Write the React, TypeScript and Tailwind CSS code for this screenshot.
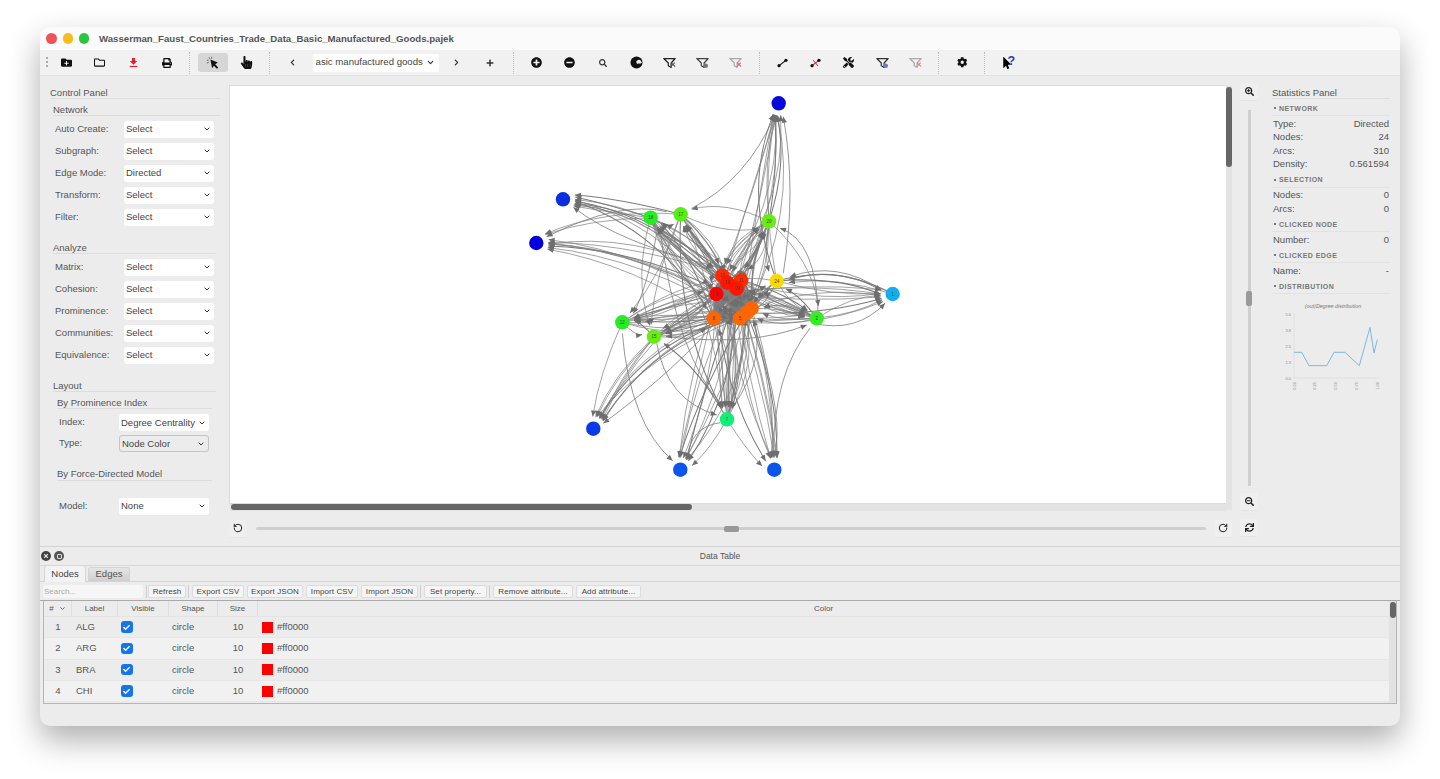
import React from "react";
import { FaFolderPlus, FaRegFolder, FaPrint, FaHandPointer, FaPlusCircle, FaMinusCircle, FaSearch, FaSearchPlus, FaSearchMinus, FaTools, FaCog, FaSync, FaChevronLeft, FaChevronRight, FaPlus, FaCheck, FaTimes, FaMousePointer } from "react-icons/fa";
import { RotateCcw, RotateCw, ChevronDown } from "lucide-react";

const font = "font-['Liberation_Sans',Arial,sans-serif]";

type N = { x: number; y: number; c: string; l: string };
const nodes: N[] = [
  { x: 778.7, y: 103.3, c: "#0808d8", l: "" },
  { x: 563, y: 199.3, c: "#0a2fe0", l: "" },
  { x: 536.3, y: 243, c: "#0000dc", l: "" },
  { x: 593.3, y: 428.7, c: "#0a3ae8", l: "" },
  { x: 680.3, y: 469.7, c: "#0a55ee", l: "" },
  { x: 774.3, y: 469.7, c: "#0a55ee", l: "" },
  { x: 892.7, y: 294, c: "#10aef0", l: "1" },
  { x: 650.7, y: 217.7, c: "#22ee22", l: "18" },
  { x: 680.7, y: 214.3, c: "#55ee11", l: "17" },
  { x: 769, y: 221.3, c: "#66ee11", l: "20" },
  { x: 816.7, y: 318.3, c: "#33ee22", l: "2" },
  { x: 622.3, y: 322.3, c: "#22ee22", l: "12" },
  { x: 654, y: 336.7, c: "#66ee11", l: "15" },
  { x: 727, y: 419.3, c: "#11ee77", l: "7" },
  { x: 776.7, y: 281, c: "#ffd800", l: "24" },
  { x: 713.7, y: 318.3, c: "#ff6600", l: "8" },
  { x: 751.7, y: 308.3, c: "#ff6600", l: "" },
  { x: 746.7, y: 312.7, c: "#ff6600", l: "" },
  { x: 740, y: 318.3, c: "#ff6600", l: "5" },
  { x: 722.3, y: 275.7, c: "#ff2a00", l: "10" },
  { x: 741, y: 280.3, c: "#ff2a00", l: "11" },
  { x: 727.3, y: 282.7, c: "#ff1500", l: "16" },
  { x: 736.7, y: 288.7, c: "#ff1500", l: "19" },
  { x: 716.3, y: 294, c: "#ff0000", l: "9" },
];

type E = { d: string; w: number; ax: number; ay: number; ang: number };

function makeEdge(sx: number, sy: number, cx: number, cy: number, ex: number, ey: number, w: number): E {
  return { d: `M${sx.toFixed(1)} ${sy.toFixed(1)}Q${cx.toFixed(1)} ${cy.toFixed(1)} ${ex.toFixed(1)} ${ey.toFixed(1)}`, w, ax: ex, ay: ey, ang: (Math.atan2(ey - cy, ex - cx) * 180) / Math.PI };
}

function buildEdges(): E[] {
  let seed = 12345;
  const r = () => {
    seed = (seed * 16807) % 2147483647;
    return seed / 2147483647;
  };
  const out: E[] = [];
  const center = nodes.slice(15);
  const arc = (a: N, b: N, bowBase: number, w: number) => {
    const dx = b.x - a.x;
    const dy = b.y - a.y;
    const len = Math.hypot(dx, dy) || 1;
    const nx = -dy / len;
    const ny = dx / len;
    const bow = bowBase * len;
    const mx = (a.x + b.x) / 2 + nx * bow;
    const my = (a.y + b.y) / 2 + ny * bow;
    const tx = b.x - mx;
    const ty = b.y - my;
    const tl = Math.hypot(tx, ty) || 1;
    const lat = (r() - 0.5) * 9;
    const ex = b.x - (tx / tl) * 12 + (-ty / tl) * lat;
    const ey = b.y - (ty / tl) * 12 + (tx / tl) * lat;
    out.push(makeEdge(a.x, a.y, mx, my, ex, ey, w));
  };
  const targets: [number, number, number, number][] = [
    [0, 8, 0.1, 0.12],
    [1, 7, 0.18, 0.05],
    [2, 9, 0.13, 0.05],
    [3, 7, 0.18, 0.05],
    [4, 10, 0, 0.16],
    [5, 10, 0, 0.16],
    [6, 7, 0.02, 0.14],
    [7, 8, 0, 0.14],
    [8, 8, -0.02, 0.16],
    [9, 8, 0, 0.15],
    [10, 8, 0.03, 0.15],
    [11, 8, 0, 0.13],
    [12, 7, -0.03, 0.12],
    [13, 8, 0, 0.16],
    [14, 3, 0, 0.3],
  ];
  targets.forEach(([t, n, base, spread]) => {
    for (let i = 0; i < n; i++) {
      const s = center[Math.floor(r() * center.length)];
      arc(s, nodes[t], base + (r() - 0.5) * 2 * spread, r() < 0.25 ? 1.05 : 0.7);
    }
  });
  const links: [number, number, number][] = [
    [9, 0, 0.12], [9, 0, -0.1], [9, 0, 0.04], [14, 0, -0.1], [14, 0, -0.2], [7, 1, 0.05], [7, 1, -0.04], [8, 1, 0.07],
    [7, 2, 0.1], [8, 2, 0.14], [12, 3, 0.12], [12, 3, 0.06], [11, 3, 0.08], [12, 3, 0.03],
    [13, 4, -0.12], [13, 5, 0.1], [10, 6, 0.1], [10, 6, -0.14], [14, 6, -0.2], [14, 6, -0.1], [14, 6, 0.08], [6, 14, 0.1], [6, 14, 0.2],
    [11, 12, 0.2], [12, 11, 0.2], [7, 12, 0.16], [8, 11, -0.1], [8, 12, 0.1], [9, 10, -0.2], [9, 14, 0.16], [10, 14, 0.1], [14, 10, 0.16],
    [7, 8, 0.4], [9, 8, 0.2], [8, 9, 0.2], [8, 13, 0.14], [7, 13, -0.14], [13, 9, -0.1], [13, 12, 0.12],
  ];
  links.forEach(([a, b, bow]) => arc(nodes[a], nodes[b], bow, r() < 0.25 ? 1.05 : 0.7));
  for (let i = 0; i < 80; i++) {
    const s = nodes[7 + Math.floor(r() * 8)];
    const t = center[Math.floor(r() * center.length)];
    arc(s, t, (r() - 0.5) * 0.5, 0.7);
  }
  for (let i = 0; i < 70; i++) {
    const a = center[Math.floor(r() * center.length)];
    const b = center[Math.floor(r() * center.length)];
    if (a !== b) out.push(makeEdge(a.x, a.y, (a.x + b.x) / 2 + (r() - 0.5) * 20, (a.y + b.y) / 2 + (r() - 0.5) * 20, b.x, b.y, 2.2));
  }
  const z = (a: number, b: number): [number, number] => [520 + a / 3, 90 + b / 3];
  const manual: number[][] = [
    [515, 355, 680, 270, 765, 75], [440, 365, 300, 330, 80, 440], [590, 530, 300, 460, 160, 352], [307, 730, 330, 1000, 458, 1112],
    [410, 760, 440, 930, 590, 975], [600, 680, 480, 830, 250, 1000], [600, 998, 510, 1010, 500, 1110], [870, 715, 760, 850, 760, 1100],
    [895, 680, 890, 450, 780, 415], [1085, 600, 950, 510, 810, 560], [880, 700, 1010, 730, 1095, 640], [440, 740, 700, 770, 860, 705],
    [790, 550, 830, 300, 790, 80], [410, 430, 380, 600, 340, 670], [420, 420, 470, 800, 610, 950],
    [700, 700, 800, 1000, 760, 1100], [640, 950, 740, 800, 700, 690],
  ];
  manual.forEach((m) => {
    const [a, b] = z(m[0], m[1]);
    const [c, d] = z(m[2], m[3]);
    const [e, f] = z(m[4], m[5]);
    out.push(makeEdge(a, b, c, d, e, f, 0.8));
  });
  return out;
}

const edges = buildEdges();

function Graph() {
  return (
    <svg viewBox="230 86 996 417" className="block w-[996px] h-[417px]">
      <g fill="none" stroke="#7c7c7c">
        {edges.map((e, i) => (
          <path key={i} d={e.d} strokeWidth={e.w} />
        ))}
      </g>
      <g fill="#6e6e6e">
        {edges.map((e, i) => (
          <path key={i} d="M0 0L-6 -2.6L-6 2.6Z" transform={`translate(${e.ax.toFixed(1)} ${e.ay.toFixed(1)}) rotate(${e.ang.toFixed(1)})`} />
        ))}
      </g>
      {nodes.map((n, i) => (
        <g key={i}>
          <circle cx={n.x} cy={n.y} r={7.2} fill={n.c} />
          {n.l && (
            <text x={n.x} y={n.y + 1.6} textAnchor="middle" fontSize="4.5" fill="#444" fontFamily="Liberation Sans">
              {n.l}
            </text>
          )}
        </g>
      ))}
    </svg>
  );
}

function Funnel({ tint = "#222", mark = "#555", second }: { tint?: string; mark?: string; second?: boolean }) {
  return (
    <svg viewBox="0 0 16 14" className="w-[13px] h-[12px]" fill="none">
      <path d="M1 1.5h14L10 7v5.5L6.5 10.5V7z" stroke={tint} strokeWidth="1.5" strokeLinejoin="round" />
      {second ? <circle cx="12" cy="10.5" r="2.8" fill={mark} /> : <path d="M9.5 11.5l5-5M10 6.5l5 5" stroke={mark} strokeWidth="1.4" />}
    </svg>
  );
}

function Edge1({ cross }: { cross?: boolean }) {
  return (
    <svg viewBox="0 0 14 12" className="w-[11px] h-[10px]">
      <path d="M2.5 9.5L11.5 2.5" stroke={cross ? "#d33" : "#222"} strokeWidth="1.3" />
      {cross && <path d="M4 2.5L10 9.5" stroke="#d33" strokeWidth="1.3" />}
      <circle cx="2.6" cy="9.4" r="2.1" fill="#111" />
      <circle cx="11.4" cy="2.6" r="2.1" fill="#111" />
    </svg>
  );
}

function Spark() {
  return (
    <svg viewBox="0 0 16 16" className="w-[14px] h-[14px]">
      <path d="M5 4l2 10 2-3 3.5 3.5 1.5-1.5L10.5 9.5l3-2z" fill="#111" />
      <path d="M3.5 1.5l1 2M1 4.5l2 1M6.5 1l0 2M1 8l2-.5" stroke="#555" strokeWidth="1" />
    </svg>
  );
}

function Download() {
  return (
    <svg viewBox="0 0 12 14" className="w-[9px] h-[11px]">
      <path d="M4 1h4v4h3L6 10 1 5h3z" fill="#e8202a" />
      <rect x="1" y="11.5" width="10" height="1.6" fill="#e8202a" />
    </svg>
  );
}

function Swirl() {
  return (
    <svg viewBox="0 0 14 14" className="w-[13px] h-[13px]">
      <circle cx="7" cy="7" r="6.5" fill="#111" />
      <path d="M7 7.5a2.6 2.6 0 0 1 5-1.5l1 1-2.5 1.6-.8-1.4-1 1.6z" fill="#f0f0f0" />
    </svg>
  );
}

function Help() {
  return (
    <span className="relative flex items-center w-[14px] h-[14px]">
      <FaMousePointer className="text-[12px] text-black" />
      <span className={`absolute left-[6.5px] top-[-1px] text-[12.5px] font-bold leading-none text-[#2a3cc0] ${font}`}>?</span>
    </span>
  );
}

function TB({ children, active }: { children: React.ReactNode; active?: boolean }) {
  return (
    <div className="w-[33.3px] h-[19px] flex items-center justify-center shrink-0">
      <div className={`w-[30px] h-[19px] flex items-center justify-center rounded-[3px] ${active ? "bg-[#d6d6d6]" : ""}`}>{children}</div>
    </div>
  );
}

function Sep() {
  return (
    <div className="w-[13px] shrink-0 h-[22px] flex justify-center">
      <div className="w-0 h-full border-l border-dotted border-[#bdbdbd]" />
    </div>
  );
}

function Toolbar() {
  return (
    <div className="h-[26px] bg-[#f1f1f1] border-b border-[#e2e2e2] flex items-center pl-[4px] text-[#111] shrink-0">
      <div className="w-[5px] h-[10px] border-l-2 border-dotted border-[#aaa] shrink-0 mr-[1px] ml-[2px] -translate-y-[1px]" />
      <div className="-ml-[2px] flex items-center">
        <TB><FaFolderPlus className="text-[11px]" /></TB>
        <TB><FaRegFolder className="text-[11px]" /></TB>
        <TB><Download /></TB>
        <TB><FaPrint className="text-[10px]" /></TB>
        <Sep />
        <TB active><Spark /></TB>
        <TB><FaHandPointer className="text-[13px]" /></TB>
        <Sep />
        <TB><FaChevronLeft className="text-[7px] text-[#333]" /></TB>
        <div className="w-[126px] h-[18px] bg-white rounded-[2px] flex items-center pl-[3px] pr-[4px] ml-[3.5px] shrink-0">
          <span className={`flex-1 text-[9.6px] text-[#444] whitespace-nowrap overflow-hidden ${font}`}>asic manufactured goods</span>
          <ChevronDown size={9} strokeWidth={3} className="text-[#333]" />
        </div>
        <div className="w-[1.4px] shrink-0" />
        <TB><FaChevronRight className="text-[7px] text-[#333]" /></TB>
        <TB><FaPlus className="text-[8px] text-[#333]" /></TB>
        <Sep />
        <TB><FaPlusCircle className="text-[11px]" /></TB>
        <TB><FaMinusCircle className="text-[11px]" /></TB>
        <TB><FaSearch className="text-[8px] text-[#333]" /></TB>
        <TB><Swirl /></TB>
        <TB><Funnel /></TB>
        <TB><Funnel tint="#444" mark="#777" second /></TB>
        <TB><Funnel tint="#aaa" mark="#d66" /></TB>
        <Sep />
        <TB><Edge1 /></TB>
        <TB><Edge1 cross /></TB>
        <TB><FaTools className="text-[11px]" /></TB>
        <TB><Funnel tint="#333" mark="#6d7fb5" second /></TB>
        <TB><Funnel tint="#aaa" mark="#d88" /></TB>
        <Sep />
        <TB><FaCog className="text-[10.5px]" /></TB>
        <Sep />
        <TB><Help /></TB>
      </div>
    </div>
  );
}

function Select({ v, w = "w-[90px]", bordered }: { v: string; w?: string; bordered?: boolean }) {
  return (
    <div className={`${w} h-[17px] rounded-[3px] flex items-center pl-[2px] pr-[3px] ${bordered ? "bg-[#ececec] border border-[#c4c4c4]" : "bg-white"}`}>
      <span className="flex-1 text-[9.5px] leading-none text-[#444] whitespace-nowrap">{v}</span>
      <ChevronDown size={8} strokeWidth={3} className="text-[#333]" />
    </div>
  );
}

function Row({ label, v }: { label: string; v: string }) {
  return (
    <div className="h-[22px] flex items-center pl-[15px]">
      <span className="w-[69px] text-[9.5px] text-[#555]">{label}</span>
      <Select v={v} />
    </div>
  );
}

function Row2({ label, v, bordered }: { label: string; v: string; bordered?: boolean }) {
  return (
    <div className="h-[21px] flex items-center pl-[19px]">
      <span className="w-[60px] text-[9.5px] text-[#555]">{label}</span>
      <Select v={v} bordered={bordered} />
    </div>
  );
}

function Head({ t, cls }: { t: string; cls: string }) {
  return <div className={`text-[9.5px] text-[#555] border-b border-[#dcdcdc] leading-none ${cls}`}>{t}</div>;
}

function ControlPanel() {
  return (
    <div className={`w-[190px] shrink-0 pt-[12px] ${font}`}>
      <Head t="Control Panel" cls="ml-[10px] mr-[10px] h-[11px]" />
      <Head t="Network" cls="ml-[13px] mr-[10px] mt-[6px] h-[11px]" />
      <div className="mt-[2px]">
        {["Auto Create:", "Subgraph:", "Edge Mode:", "Transform:", "Filter:"].map((l) => (
          <Row key={l} label={l} v={l === "Edge Mode:" ? "Directed" : "Select"} />
        ))}
      </div>
      <Head t="Analyze" cls="ml-[13px] mr-[14px] mt-[14.5px] h-[11px]" />
      <div className="mt-[2.5px]">
        {["Matrix:", "Cohesion:", "Prominence:", "Communities:", "Equivalence:"].map((l) => (
          <Row key={l} label={l} v="Select" />
        ))}
      </div>
      <Head t="Layout" cls="ml-[13px] mr-[14px] mt-[15px] h-[11px]" />
      <Head t="By Prominence Index" cls="ml-[17px] mr-[18px] mt-[6px] h-[11px]" />
      <div className="mt-[3px]">
        <Row2 label="Index:" v="Degree Centrality" />
        <Row2 label="Type:" v="Node Color" bordered />
      </div>
      <Head t="By Force-Directed Model" cls="ml-[17px] mr-[18px] mt-[15px] h-[12px]" />
      <div className="mt-[14.5px]">
        <Row2 label="Model:" v="None" />
      </div>
    </div>
  );
}

function IconBtn({ children }: { children: React.ReactNode }) {
  return <div className="w-[18px] h-[18px] flex items-center justify-center bg-[#efefef] border-b border-[#e4e4e4] rounded-[2px] text-[#222] shrink-0">{children}</div>;
}

function CanvasArea() {
  return (
    <div className="w-[1000px] shrink-0 pt-[10px]">
      <div className="flex">
        <div className="w-[996px]">
          <div className="h-[417px] bg-white overflow-hidden ring-1 ring-[#dadada]">
            <Graph />
          </div>
          <div className="h-[7px] bg-[#e3e3e3]">
            <div className="w-[461px] h-[6px] ml-[1px] mt-[0.5px] bg-[#666] rounded-full" />
          </div>
        </div>
        <div className="w-[6px] h-[424px] bg-[#e3e3e3] pt-[1px]">
          <div className="w-[6px] h-[80px] bg-[#666] rounded-full" />
        </div>
      </div>
      <div className="flex items-center h-[18px] mt-[9px] -ml-[1px]">
        <IconBtn><RotateCcw size={10} strokeWidth={2.4} /></IconBtn>
        <div className="w-[9px] shrink-0" />
        <div className="w-[950px] h-[3px] bg-[#cfcfcf] rounded-full flex items-center justify-center shrink-0">
          <div className="w-[15px] h-[6px] bg-[#999] rounded-[2px]" />
        </div>
        <div className="w-[8px] shrink-0" />
        <IconBtn><RotateCw size={10} strokeWidth={2.4} /></IconBtn>
      </div>
    </div>
  );
}

function VSlider() {
  return (
    <div className="w-[24px] ml-[7px] shrink-0 pt-[7px] flex flex-col items-center">
      <IconBtn><FaSearchPlus className="text-[9px]" /></IconBtn>
      <div className="w-[3px] h-[376px] mt-[9px] bg-[#cfcfcf] flex flex-col">
        <div className="h-[181px] shrink-0" />
        <div className="w-[6px] h-[15px] -ml-[1.5px] bg-[#999] rounded-[2px]" />
      </div>
      <div className="mt-[7px]"><IconBtn><FaSearchMinus className="text-[9px]" /></IconBtn></div>
      <div className="mt-[8px]"><IconBtn><FaSync className="text-[9px]" /></IconBtn></div>
    </div>
  );
}

function SecHead({ t }: { t: string }) {
  return (
    <div className="h-[15px] flex items-center pl-[2px] border-b border-[#e2e2e2] mb-[1px]">
      <span className="w-[2px] h-[2px] bg-[#777] mr-[3px]" />
      <span className="text-[7px] font-bold tracking-[0.45px] text-[#777] leading-none">{t}</span>
    </div>
  );
}

function Stat({ k, v }: { k: string; v: string }) {
  return (
    <div className="h-[13.5px] flex items-center justify-between pl-[1px] pr-[1px] text-[9.5px] text-[#555]">
      <span>{k}</span>
      <span>{v}</span>
    </div>
  );
}

function Chart() {
  const pts = [[222, 220], [245, 220], [267, 260], [320, 260], [342, 220], [375, 220], [418, 260], [450, 145], [462, 222], [472, 182]];
  const map = (p: number[]) => `${(p[0] / 3).toFixed(1)},${(p[1] / 3 - 13).toFixed(1)}`;
  return (
    <svg viewBox="51 0 120 110" className="w-[120px] h-[110px] block -ml-[1px] -mt-[3px]" fontFamily="Liberation Sans">
      <text x="113" y="16" fontSize="5.4" fontStyle="italic" textAnchor="middle" fill="#777">(out)Degree distribution</text>
      <path d="M74 22V86H160" stroke="#ddd" strokeWidth="0.8" fill="none" />
      {[["5.0", 22], ["3.8", 38], ["2.5", 54], ["1.3", 70], ["0.0", 86]].map(([t, y]) => (
        <text key={t as string} x="71" y={(y as number) + 1.5} fontSize="4" textAnchor="end" fill="#888">{t}</text>
      ))}
      {[["0.00", 74], ["0.25", 94.7], ["0.50", 115.7], ["0.75", 136.7], ["1.00", 157.3]].map(([t, x]) => (
        <text key={t as string} fontSize="4" textAnchor="end" fill="#888" transform={`translate(${(x as number) + 1.5} 90) rotate(-90)`}>{t}</text>
      ))}
      <polyline points={pts.map(map).join(" ")} fill="none" stroke="#6db3dc" strokeWidth="0.9" />
    </svg>
  );
}

function StatsPanel() {
  return (
    <div className={`w-[118px] ml-[11px] shrink-0 pt-[12px] ${font}`}>
      <div className="text-[9.5px] text-[#555] h-[11px] leading-none border-b border-[#dcdcdc]">Statistics Panel</div>
      <div className="mt-[2px]">
        <SecHead t="NETWORK" />
        <div>
          <Stat k="Type:" v="Directed" />
          <Stat k="Nodes:" v="24" />
          <Stat k="Arcs:" v="310" />
          <Stat k="Density:" v="0.561594" />
        </div>
        <div className="mt-[1.5px]"><SecHead t="SELECTION" /></div>
        <Stat k="Nodes:" v="0" />
        <Stat k="Arcs:" v="0" />
        <div className="mt-[1.5px]"><SecHead t="CLICKED NODE" /></div>
        <Stat k="Number:" v="0" />
        <div className="mt-[1.5px]"><SecHead t="CLICKED EDGE" /></div>
        <Stat k="Name:" v="-" />
        <div className="mt-[1.5px]"><SecHead t="DISTRIBUTION" /></div>
        <div><Chart /></div>
      </div>
    </div>
  );
}

function Btn({ t, w, ml = "" }: { t: string; w: string; ml?: string }) {
  return (
    <div className={`${w} ${ml} h-[13px] shrink-0 flex items-center justify-center bg-[#f5f5f5] border border-[#dcdcdc] rounded-[2px] text-[8px] tracking-[0.1px] text-[#444] whitespace-nowrap`}>
      {t}
    </div>
  );
}

const rows = [
  ["1", "ALG"],
  ["2", "ARG"],
  ["3", "BRA"],
  ["4", "CHI"],
];

const gridCols = "grid grid-cols-[28px_46px_51px_49px_40px_1fr]";

function DataTable() {
  return (
    <div className={`flex-1 flex flex-col min-h-0 ${font}`}>
      <div className="h-[19px] shrink-0 flex items-center border-b border-[#d8d8d8] relative">
        <div className="flex items-center gap-[3px] pl-[1px]">
          <span className="w-[10px] h-[10px] rounded-full bg-[#444] flex items-center justify-center"><FaTimes className="text-[6px] text-[#eee]" /></span>
          <span className="w-[10px] h-[10px] rounded-full bg-[#555] flex items-center justify-center"><span className="w-[5px] h-[5px] border border-[#ddd] rounded-[1px]" /></span>
        </div>
        <span className="flex-1 text-center text-[8.5px] text-[#555] pt-[1px]">Data Table</span>
        <span className="w-[24px]" />
      </div>
      <div className="h-[16px] shrink-0 flex items-end pl-[4px] border-b border-[#d4d4d4] gap-[2px]">
        <div className="w-[42px] h-[17px] -mb-[1px] bg-[#f3f3f3] border border-b-0 border-[#d4d4d4] rounded-t-[3px] flex items-center justify-center text-[9.5px] text-[#444]">Nodes</div>
        <div className="w-[42px] h-[14px] bg-linear-to-b from-[#e6e6e6] to-[#cfcfcf] border border-b-0 border-[#d4d4d4] rounded-t-[3px] flex items-center justify-center text-[9.5px] text-[#555]">Edges</div>
      </div>
      <div className="h-[19px] shrink-0 flex items-center pl-[3px] pt-[1px] border-b border-[#a9a9a9] bg-[#ececec]">
        <div className="w-[100px] h-[13px] bg-[#f6f6f6] rounded-[2px] pl-[1px] text-[8px] leading-[13px] text-[#aaa]">Search...</div>
        <div className="w-0 h-[13px] border-l border-[#cfcfcf] ml-[3px] mr-[1px]" />
        <Btn t="Refresh" w="w-[38px]" />
        <div className="w-0 h-[13px] border-l border-[#cfcfcf] ml-[2px] mr-[3px]" />
        <Btn t="Export CSV" w="w-[52px]" />
        <Btn t="Export JSON" w="w-[56px]" ml="ml-[3px]" />
        <Btn t="Import CSV" w="w-[52px]" ml="ml-[3px]" />
        <Btn t="Import JSON" w="w-[57px]" ml="ml-[3px]" />
        <div className="w-0 h-[13px] border-l border-[#cfcfcf] ml-[2px] mr-[3px]" />
        <Btn t="Set property..." w="w-[63px]" />
        <div className="w-0 h-[13px] border-l border-[#cfcfcf] ml-[2px] mr-[3px]" />
        <Btn t="Remove attribute..." w="w-[80px]" />
        <Btn t="Add attribute..." w="w-[65px]" ml="ml-[3px]" />
      </div>
      <div className="ml-[3px] mr-[3px] h-[103px] shrink-0 border-l border-r border-b border-[#b5b5b5] flex">
        <div className="flex-1 min-w-0">
          <div className={`${gridCols} h-[16px] border-b border-[#e3e3e3] text-[8px] text-[#555] items-center`}>
            <div className="flex items-center justify-center gap-[5px] h-full border-r border-[#dedede]"><span>#</span><ChevronDown size={7} strokeWidth={3} /></div>
            <div className="text-center h-full leading-[15px] border-r border-[#dedede]">Label</div>
            <div className="text-center h-full leading-[15px] border-r border-[#dedede]">Visible</div>
            <div className="text-center h-full leading-[15px] border-r border-[#dedede]">Shape</div>
            <div className="text-center h-full leading-[15px] border-r border-[#dedede]">Size</div>
            <div className="text-center h-full leading-[15px]">Color</div>
          </div>
          {rows.map(([n, l], i) => (
            <div key={n} className={`${gridCols} h-[21.3px] text-[9.5px] text-[#555] items-center border-b border-[#e6e6e6] ${i % 2 === 0 ? "bg-[#ececec]" : "bg-[#f1f1f1]"}`}>
              <div className="text-center">{n}</div>
              <div className="pl-[4px]">{l}</div>
              <div className="pl-[3px] flex items-center h-full">
                <span className="w-[11.5px] h-[11.5px] rounded-[3px] bg-[#1476ea] flex items-center justify-center"><FaCheck className="text-[7px] text-white" /></span>
              </div>
              <div className="pl-[3px]">circle</div>
              <div className="text-center">10</div>
              <div className="pl-[4px] flex items-center gap-[4px]">
                <span className="w-[11px] h-[11px] bg-[#ff0000]" />
                <span>#ff0000</span>
              </div>
            </div>
          ))}
        </div>
        <div className="w-[7px] bg-[#e2e2e2] shrink-0 pt-[1px]">
          <div className="w-[6px] h-[16px] ml-[1px] bg-[#666] rounded-full" />
        </div>
      </div>
    </div>
  );
}

export default function App() {
  return (
    <div className={`w-[1440px] h-[779px] bg-white pt-[27px] px-[40px] overflow-hidden ${font}`}>
      <div className="w-[1360px] h-[699px] bg-[#ececec] rounded-[10px] overflow-hidden flex flex-col shadow-[0_14px_32px_rgba(0,0,0,0.32)]">
        <div className="h-[23px] bg-[#fbfbfb] shrink-0 flex items-center pl-[6px]">
          <span className="w-[10.5px] h-[10.5px] rounded-full bg-[#f0525a]" />
          <span className="w-[10.5px] h-[10.5px] rounded-full bg-[#f7bd1a] ml-[6px]" />
          <span className="w-[10.5px] h-[10.5px] rounded-full bg-[#29c440] ml-[5.5px]" />
          <span className="ml-[10px] text-[9.65px] font-bold text-[#555] whitespace-nowrap pt-[1px]">Wasserman_Faust_Countries_Trade_Data_Basic_Manufactured_Goods.pajek</span>
        </div>
        <Toolbar />
        <div className="h-[471px] shrink-0 flex border-b border-[#d2d2d2]">
          <ControlPanel />
          <CanvasArea />
          <VSlider />
          <StatsPanel />
        </div>
        <DataTable />
      </div>
    </div>
  );
}
